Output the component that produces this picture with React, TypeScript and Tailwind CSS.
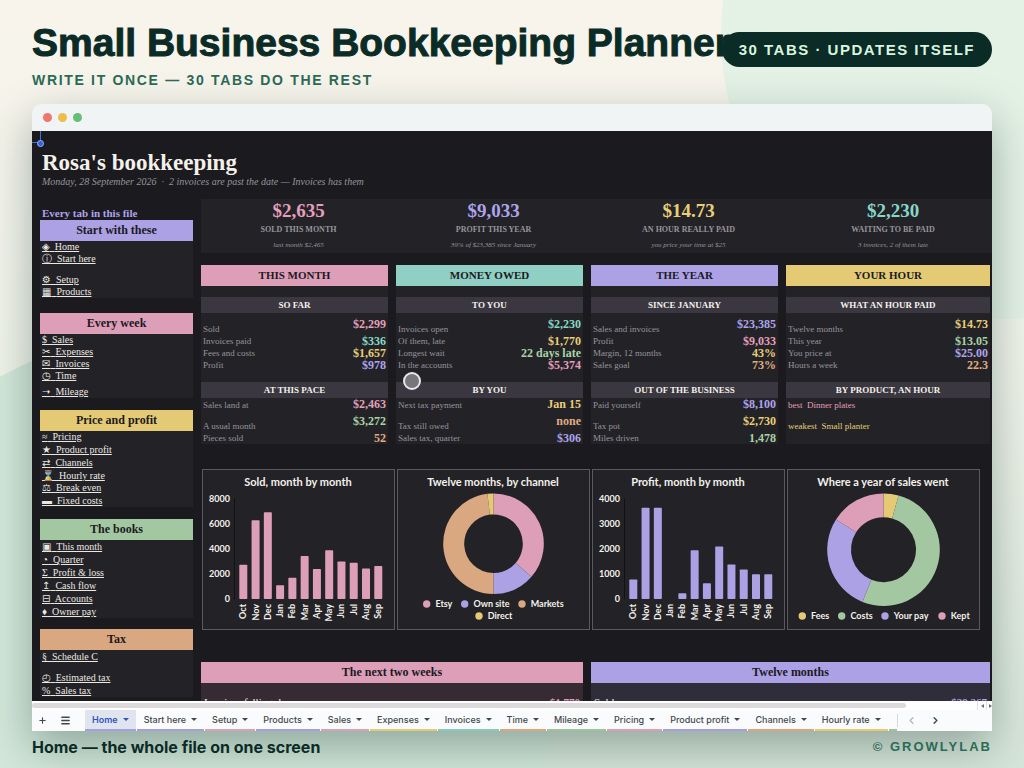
import { ChevronLeft, ChevronRight, Menu, Plus } from "lucide-react";

interface NavGroup {
  title: string;
  color: string;
  space: string;
  links: { icon: string; label: string; height: string }[];
}

interface Block {
  title: string;
  rows: { label: string; value: string; color: string }[];
}

const PINK = "text-[#e39fbb]";
const PURPLE = "text-[#aea4ec]";
const YELLOW = "text-[#e8cf78]";
const GREEN = "text-[#a9d3a6]";
const TEAL = "text-[#86d8c6]";
const ORANGE = "text-[#e0ac80]";

const NAV: NavGroup[] = [
  {
    title: "Start with these",
    color: "bg-[#aba1e4]",
    space: "mb-[15px]",
    links: [
      { icon: "◈", label: "Home", height: "h-3" },
      { icon: "ⓘ", label: "Start here", height: "h-3" },
      { icon: "⚙", label: "Setup", height: "h-[21px]" },
      { icon: "▦", label: "Products", height: "h-3" },
    ],
  },
  {
    title: "Every week",
    color: "bg-[#dd9eb8]",
    space: "mb-3",
    links: [
      { icon: "$", label: "Sales", height: "h-3" },
      { icon: "✂", label: "Expenses", height: "h-3" },
      { icon: "✉", label: "Invoices", height: "h-3" },
      { icon: "◷", label: "Time", height: "h-3" },
      { icon: "➝", label: "Mileage", height: "h-4" },
    ],
  },
  {
    title: "Price and profit",
    color: "bg-[#e5ca76]",
    space: "mb-3",
    links: [
      { icon: "≈", label: "Pricing", height: "h-3" },
      { icon: "★", label: "Product profit", height: "h-[13px]" },
      { icon: "⇄", label: "Channels", height: "h-[13px]" },
      { icon: "⌛", label: "Hourly rate", height: "h-[13px]" },
      { icon: "⚖", label: "Break even", height: "h-3" },
      { icon: "▬", label: "Fixed costs", height: "h-[13px]" },
    ],
  },
  {
    title: "The books",
    color: "bg-[#a3c7a0]",
    space: "mb-[11px]",
    links: [
      { icon: "▣", label: "This month", height: "h-[13px]" },
      { icon: "◔", label: "Quarter", height: "h-[13px]" },
      { icon: "Σ", label: "Profit & loss", height: "h-[13px]" },
      { icon: "↥", label: "Cash flow", height: "h-[13px]" },
      { icon: "⊟", label: "Accounts", height: "h-[13px]" },
      { icon: "♦", label: "Owner pay", height: "h-[13px]" },
    ],
  },
  {
    title: "Tax",
    color: "bg-[#d9a780]",
    space: "",
    links: [
      { icon: "§", label: "Schedule C", height: "h-[13px]" },
      { icon: "◴", label: "Estimated tax", height: "h-[21px]" },
      { icon: "%", label: "Sales tax", height: "h-[13px]" },
    ],
  },
];

const KPIS = [
  { value: "$2,635", label: "SOLD THIS MONTH", note: "last month $2,465", color: PINK },
  { value: "$9,033", label: "PROFIT THIS YEAR", note: "39% of $23,385 since January", color: PURPLE },
  { value: "$14.73", label: "AN HOUR REALLY PAID", note: "you price your time at $25", color: YELLOW },
  { value: "$2,230", label: "WAITING TO BE PAID", note: "3 invoices, 2 of them late", color: TEAL },
];

const CARDS: { title: string; color: string; blocks: Block[] }[] = [
  {
    title: "THIS MONTH",
    color: "bg-[#dd9eb8]",
    blocks: [
      {
        title: "SO FAR",
        rows: [
          { label: "Sold", value: "$2,299", color: PINK },
          { label: "Invoices paid", value: "$336", color: TEAL },
          { label: "Fees and costs", value: "$1,657", color: YELLOW },
          { label: "Profit", value: "$978", color: PURPLE },
        ],
      },
      {
        title: "AT THIS PACE",
        rows: [
          { label: "Sales land at", value: "$2,463", color: PINK },
          { label: "A usual month", value: "$3,272", color: GREEN },
          { label: "Pieces sold", value: "52", color: ORANGE },
        ],
      },
    ],
  },
  {
    title: "MONEY OWED",
    color: "bg-[#90cfc3]",
    blocks: [
      {
        title: "TO YOU",
        rows: [
          { label: "Invoices open", value: "$2,230", color: TEAL },
          { label: "Of them, late", value: "$1,770", color: YELLOW },
          { label: "Longest wait", value: "22 days late", color: GREEN },
          { label: "In the accounts", value: "$5,374", color: PINK },
        ],
      },
      {
        title: "BY YOU",
        rows: [
          { label: "Next tax payment", value: "Jan 15", color: YELLOW },
          { label: "Tax still owed", value: "none", color: ORANGE },
          { label: "Sales tax, quarter", value: "$306", color: PURPLE },
        ],
      },
    ],
  },
  {
    title: "THE YEAR",
    color: "bg-[#aba1e4]",
    blocks: [
      {
        title: "SINCE JANUARY",
        rows: [
          { label: "Sales and invoices", value: "$23,385", color: PURPLE },
          { label: "Profit", value: "$9,033", color: PINK },
          { label: "Margin, 12 months", value: "43%", color: YELLOW },
          { label: "Sales goal", value: "73%", color: ORANGE },
        ],
      },
      {
        title: "OUT OF THE BUSINESS",
        rows: [
          { label: "Paid yourself", value: "$8,100", color: PURPLE },
          { label: "Tax pot", value: "$2,730", color: YELLOW },
          { label: "Miles driven", value: "1,478", color: GREEN },
        ],
      },
    ],
  },
  {
    title: "YOUR HOUR",
    color: "bg-[#e5ca76]",
    blocks: [
      {
        title: "WHAT AN HOUR PAID",
        rows: [
          { label: "Twelve months", value: "$14.73", color: YELLOW },
          { label: "This year", value: "$13.05", color: GREEN },
          { label: "You price at", value: "$25.00", color: PURPLE },
          { label: "Hours a week", value: "22.3", color: ORANGE },
        ],
      },
      {
        title: "BY PRODUCT, AN HOUR",
        rows: [
          { label: "best  Dinner plates", value: "", color: PINK },
          { label: "weakest  Small planter", value: "", color: YELLOW },
          { label: "", value: "", color: "" },
        ],
      },
    ],
  },
];

// row heights of the upper and the lower block of a card
const ROW_HEIGHTS = [
  ["h-[22px]", "h-3", "h-3", "h-3"],
  ["h-[13px]", "h-[21px]", "h-[11px]"],
];

const MONTHS = ["Oct", "Nov", "Dec", "Jan", "Feb", "Mar", "Apr", "May", "Jun", "Jul", "Aug", "Sep"];
const SOLD = [2750, 6300, 6950, 1100, 1700, 3450, 2400, 3900, 3000, 2900, 2450, 2650];
const PROFIT = [780, 3650, 3650, 0, 230, 1950, 630, 2100, 1380, 1180, 990, 990];

const TABS = [
  { label: "Home", line: "border-[#a79ee0]" },
  { label: "Start here", line: "border-[#a79ee0]" },
  { label: "Setup", line: "border-[#dd9eb8]" },
  { label: "Products", line: "border-[#a79ee0]" },
  { label: "Sales", line: "border-[#dd9eb8]" },
  { label: "Expenses", line: "border-[#e5ca76]" },
  { label: "Invoices", line: "border-[#86cabb]" },
  { label: "Time", line: "border-[#dea57d]" },
  { label: "Mileage", line: "border-[#9cc49b]" },
  { label: "Pricing", line: "border-[#dd9eb8]" },
  { label: "Product profit", line: "border-[#a79ee0]" },
  { label: "Channels", line: "border-[#dea57d]" },
  { label: "Hourly rate", line: "border-[#e5ca76]" },
];

function ChartFrame({ title, children }: { title: string; children: React.ReactNode }) {
  return (
    <svg
      viewBox="0 0 193 161"
      role="img"
      aria-label={title}
      className="block w-full font-['Lato',sans-serif] font-bold"
    >
      <rect x="0.5" y="0.5" width="192" height="160" fill="#232227" stroke="#5b595f" />
      <text x="96" y="17" textAnchor="middle" fontSize="11" fill="#f4f1ea">
        {title}
      </text>
      {children}
    </svg>
  );
}

function BarChart({ title, data, max, color }: { title: string; data: number[]; max: number; color: string }) {
  return (
    <ChartFrame title={title}>
      {[4, 3, 2, 1, 0].map((n) => (
        <text key={n} x="28" y={133 - n * 25} textAnchor="end" fontSize="9" fill="#f4f1ea">
          {(max / 4) * n}
        </text>
      ))}
      <path d="M32.5 29V130" stroke="#121114" />
      {data.map((value, i) => {
        const x = 41.3 + i * 12.27;
        const h = (value / max) * 100;
        return (
          <g key={MONTHS[i]}>
            {value > 0 && <rect x={x - 4} y={130 - h} width="8" height={h} rx="0.8" fill={color} />}
            <text
              transform={`translate(${x + 3} 135) rotate(-90)`}
              textAnchor="end"
              fontSize="9"
              fill="#f4f1ea"
            >
              {MONTHS[i]}
            </text>
          </g>
        );
      })}
    </ChartFrame>
  );
}

interface Slice {
  label: string;
  from: number;
  to: number;
  color: string;
  x: number;
  y: number;
}

function Donut({ title, cy, outer, inner, slices }: { title: string; cy: number; outer: number; inner: number; slices: Slice[] }) {
  const cx = 96.5;
  const point = (deg: number, r: number) => {
    const a = (deg * Math.PI) / 180;
    return `${cx + r * Math.sin(a)} ${cy - r * Math.cos(a)}`;
  };

  return (
    <ChartFrame title={title}>
      {slices.map((s) => {
        const large = s.to - s.from > 180 ? 1 : 0;
        return (
          <g key={s.label}>
            <path
              d={`M${point(s.from, outer)} A${outer} ${outer} 0 ${large} 1 ${point(s.to, outer)} L${point(s.to, inner)} A${inner} ${inner} 0 ${large} 0 ${point(s.from, inner)}Z`}
              fill={s.color}
            />
            <circle cx={s.x} cy={s.y} r="3.7" fill={s.color} />
            <text x={s.x + 8.7} y={s.y + 3} fontSize="9" fill="#f4f1ea">
              {s.label}
            </text>
          </g>
        );
      })}
    </ChartFrame>
  );
}

function Sidebar() {
  return (
    <nav className="w-[153px] shrink-0 pt-2">
      <h2 className="h-[13px] pl-0.5 text-[11px] leading-[13px] font-bold text-[#aea4ec]">
        Every tab in this file
      </h2>
      {NAV.map((group) => (
        <section key={group.title} className={group.space}>
          <h3 className={`h-[21px] text-center text-xs leading-[21px] font-bold text-[#1b1a1e] ${group.color}`}>
            {group.title}
          </h3>
          <ul className="bg-[#232227] pl-0.5">
            {group.links.map(({ icon, label, height }) => (
              <li key={label} className={`flex items-end ${height}`}>
                <a href="#" className="text-[10px] leading-3 whitespace-pre text-[#ebe8e2] underline">
                  {icon}{"  "}{label}
                </a>
              </li>
            ))}
          </ul>
        </section>
      ))}
    </nav>
  );
}

function Card({ title, color, blocks }: (typeof CARDS)[number]) {
  return (
    <section className="bg-[#232227]">
      <h3 className={`h-[21px] text-center text-[11px] leading-[21px] font-bold text-[#1b1a1e] ${color}`}>
        {title}
      </h3>
      {blocks.map((block, b) => (
        <table key={block.title} className="mt-[11px] w-full">
          <thead>
            <tr>
              <th colSpan={2} className="h-4 bg-[#3a3740] p-0 text-[9px] leading-4 text-[#f4f1ea]">
                {block.title}
              </th>
            </tr>
          </thead>
          <tbody>
            {block.rows.map((row, i) => (
              <tr key={i} className={ROW_HEIGHTS[b][i]}>
                <td
                  className={`p-0 pl-0.5 align-bottom text-[9px] leading-3 whitespace-pre ${
                    row.value ? "text-[#98949c]" : row.color
                  }`}
                >
                  {row.label}
                </td>
                <td className={`p-0 pr-0.5 text-right align-middle text-xs leading-[11px] font-bold ${row.color}`}>
                  {row.value}
                </td>
              </tr>
            ))}
          </tbody>
        </table>
      ))}
    </section>
  );
}

function SheetTabs() {
  return (
    <div className="flex h-[21px] shrink-0 bg-[#f9fbfd] font-['Inter',sans-serif] text-[9px] font-medium text-[#44474a]">
      <button type="button" aria-label="Add sheet" className="ml-1 flex w-3 items-center justify-center">
        <Plus size={9} strokeWidth={3} />
      </button>
      <button type="button" aria-label="All sheets" className="mr-3 ml-[10px] flex w-[15px] items-center justify-center">
        <Menu size={11} strokeWidth={3} />
      </button>
      <div className="flex min-w-0 overflow-hidden">
        {TABS.map(({ label, line }, i) => (
          <button
            key={label}
            type="button"
            className={`mr-px flex shrink-0 items-center gap-[5px] border-b-2 px-[7px] whitespace-nowrap ${line} ${
              i === 0 ? "bg-[#dfe4ee] font-semibold text-[#2f55c0]" : ""
            }`}
          >
            {label}
            <svg viewBox="0 0 6 3" className="h-[3px] w-[6px] fill-current">
              <path d="M0 0h6L3 3z" />
            </svg>
          </button>
        ))}
        <span className="w-2 border-b-2 border-[#9cc49b]" />
      </div>
      <div className="my-1 mr-[8px] w-px bg-[#d5d8db]" />
      <button type="button" aria-label="Previous sheets" className="w-3 text-[#b4b7ba]">
        <ChevronLeft size={11} strokeWidth={3} />
      </button>
      <button type="button" aria-label="Next sheets" className="ml-3 w-3">
        <ChevronRight size={11} strokeWidth={3} />
      </button>
    </div>
  );
}

export default function App() {
  return (
    <div className="relative flex h-screen flex-col overflow-hidden bg-linear-to-b from-[#f8f4ec] via-[#eef2e8] to-[#d6e5d9] px-8 font-['Liberation_Sans',sans-serif]">
      <div className="absolute -top-[249px] -right-[265px] size-[568px] rounded-full bg-[#e4f1e5]" />
      <div className="absolute -bottom-[302px] -left-[190px] size-[740px] rounded-full bg-[#d3e7da]" />

      <header className="relative flex h-[104px] shrink-0 items-start justify-between pt-[22px]">
        <div className="min-w-0 flex-1">
          <h1 className="text-[39px] leading-[42px] font-bold whitespace-nowrap text-[#0b2b26] [-webkit-text-stroke:1px_#0b2b26]">
            Small Business Bookkeeping Planner
          </h1>
          <p className="mt-2 text-sm leading-4 font-bold tracking-[0.12em] text-[#2b6b57]">
            WRITE IT ONCE — 30 TABS DO THE REST
          </p>
        </div>
        <span className="relative mt-[10px] shrink-0 rounded-full bg-[#0b2b26] px-[17px] text-[15px] leading-[35px] font-bold tracking-[0.1em] text-[#d9f5df]">
          30 TABS · UPDATES ITSELF
        </span>
      </header>

      <main className="relative flex min-h-0 flex-1 flex-col rounded-t-[10px] shadow-[0_16px_44px_rgba(11,43,38,0.34)]">
        <div className="flex h-[27px] shrink-0 items-center gap-[6px] rounded-t-[10px] bg-[#f1f4f4] pl-[11px]">
          <i className="size-[9px] rounded-full bg-[#ee766a]" />
          <i className="size-[9px] rounded-full bg-[#eebd4c]" />
          <i className="size-[9px] rounded-full bg-[#66bf77]" />
        </div>

        <div className="relative min-h-0 flex-1 overflow-hidden bg-[#1b1a1e] pl-2 font-['Liberation_Serif','DejaVu_Sans',serif]">
          <div className="absolute top-0 left-0 h-3 w-[9px] border-r border-b border-[#3f6fe0]" />
          <div className="absolute top-[9px] left-[5px] size-[7px] rounded-full border border-[#9db8f3] bg-[#2f63d8]" />

          <div className="h-[68px] pt-5 pl-0.5">
            <h2 className="text-[23px] leading-6 font-bold text-[#f4f1ea]">Rosa's bookkeeping</h2>
            <p className="text-[10px] leading-[14px] text-[#98949c] italic">
              Monday, 28 September 2026 &nbsp;·&nbsp; 2 invoices are past the date — Invoices has them
            </p>
          </div>

          <div className="flex gap-2">
            <Sidebar />

            <div className="min-w-0 flex-1">
              <div className="grid h-[54px] grid-cols-[195fr_195fr_195fr_206fr] bg-[#232227] text-center">
                {KPIS.map((kpi) => (
                  <div key={kpi.label} className="last:pl-2">
                    <p className={`text-[19px] leading-[23px] font-bold ${kpi.color}`}>{kpi.value}</p>
                    <p className="text-[8px] leading-4 font-bold text-[#98949c]">{kpi.label}</p>
                    <p className="text-[7px] leading-[14px] text-[#98949c] italic">{kpi.note}</p>
                  </div>
                ))}
              </div>

              <div className="mt-3 mr-0.5 grid grid-cols-[187fr_187fr_187fr_204fr] gap-2">
                {CARDS.map((card) => (
                  <Card key={card.title} {...card} />
                ))}
              </div>

              <div className="mt-[25px] mr-3 ml-px grid grid-cols-4 gap-0.5">
                <BarChart title="Sold, month by month" data={SOLD} max={8000} color="#dd9eb8" />
                <Donut
                  title="Twelve months, by channel"
                  cy={74.7}
                  outer={50.3}
                  inner={29.3}
                  slices={[
                    { label: "Etsy", from: 0, to: 131, color: "#dd9eb8", x: 29.7, y: 135 },
                    { label: "Own site", from: 131, to: 180, color: "#aba1e4", x: 67.7, y: 135 },
                    { label: "Markets", from: 180, to: 353, color: "#d9a780", x: 125, y: 135 },
                    { label: "Direct", from: 353, to: 360, color: "#e5ca76", x: 82, y: 147 },
                  ]}
                />
                <BarChart title="Profit, month by month" data={PROFIT} max={4000} color="#aba1e4" />
                <Donut
                  title="Where a year of sales went"
                  cy={80.7}
                  outer={56.3}
                  inner={32.5}
                  slices={[
                    { label: "Fees", from: 0, to: 15.5, color: "#e5ca76", x: 15.3, y: 147 },
                    { label: "Costs", from: 15.5, to: 202, color: "#a3c7a0", x: 54.7, y: 147 },
                    { label: "Your pay", from: 202, to: 302.5, color: "#aba1e4", x: 98, y: 147 },
                    { label: "Kept", from: 302.5, to: 360, color: "#dd9eb8", x: 155, y: 147 },
                  ]}
                />
              </div>

              <div className="mt-8 mr-0.5 grid grid-cols-[382fr_399fr] gap-2">
                <section className="bg-[#372b33] text-[11px] text-[#f4f1ea]">
                  <h3 className="bg-[#dd9eb8] text-center text-xs leading-[21px] font-bold text-[#1b1a1e]">
                    The next two weeks
                  </h3>
                  <p className="flex justify-between px-[3px] pt-3 leading-[14px]">
                    Invoices falling due <b className={PINK}>$1,770</b>
                  </p>
                </section>
                <section className="bg-[#2f2d3a] text-[11px] text-[#f4f1ea]">
                  <h3 className="bg-[#aba1e4] text-center text-xs leading-[21px] font-bold text-[#1b1a1e]">
                    Twelve months
                  </h3>
                  <p className="flex justify-between px-[3px] pt-3 leading-[14px]">
                    Sold <b className={PURPLE}>$39,267</b>
                  </p>
                </section>
              </div>
            </div>
          </div>

          <div className="absolute top-[241px] left-[371px] size-[18px] rounded-full border-2 border-[#e8e8e8] bg-[#77767a]" />
        </div>

        <div className="flex h-[9px] shrink-0 items-center bg-white">
          <div className="h-[5px] w-[91%] rounded-full bg-[#dcdadb]" />
          <div className="ml-auto flex h-full text-[#6d7073]">
            <span className="flex w-[9px] items-center justify-center border-l border-[#dfe1e3]">
              <svg viewBox="0 0 3 4" className="h-1 w-[3px] fill-current">
                <path d="M3 0v4L0 2z" />
              </svg>
            </span>
            <span className="flex w-[6px] items-center justify-end border-l border-[#dfe1e3]">
              <svg viewBox="0 0 3 4" className="h-1 w-[3px] fill-current">
                <path d="M0 0v4l3-2z" />
              </svg>
            </span>
          </div>
        </div>
        <SheetTabs />
      </main>

      <footer className="relative flex h-[37px] shrink-0 justify-between font-bold">
        <p className="font-['Inter',sans-serif] text-base leading-8 text-[#0b2b26]">Home — the whole file on one screen</p>
        <p className="text-[13px] leading-8 tracking-[2px] text-[#2b6b57]">© GROWLYLAB</p>
      </footer>
    </div>
  );
}
